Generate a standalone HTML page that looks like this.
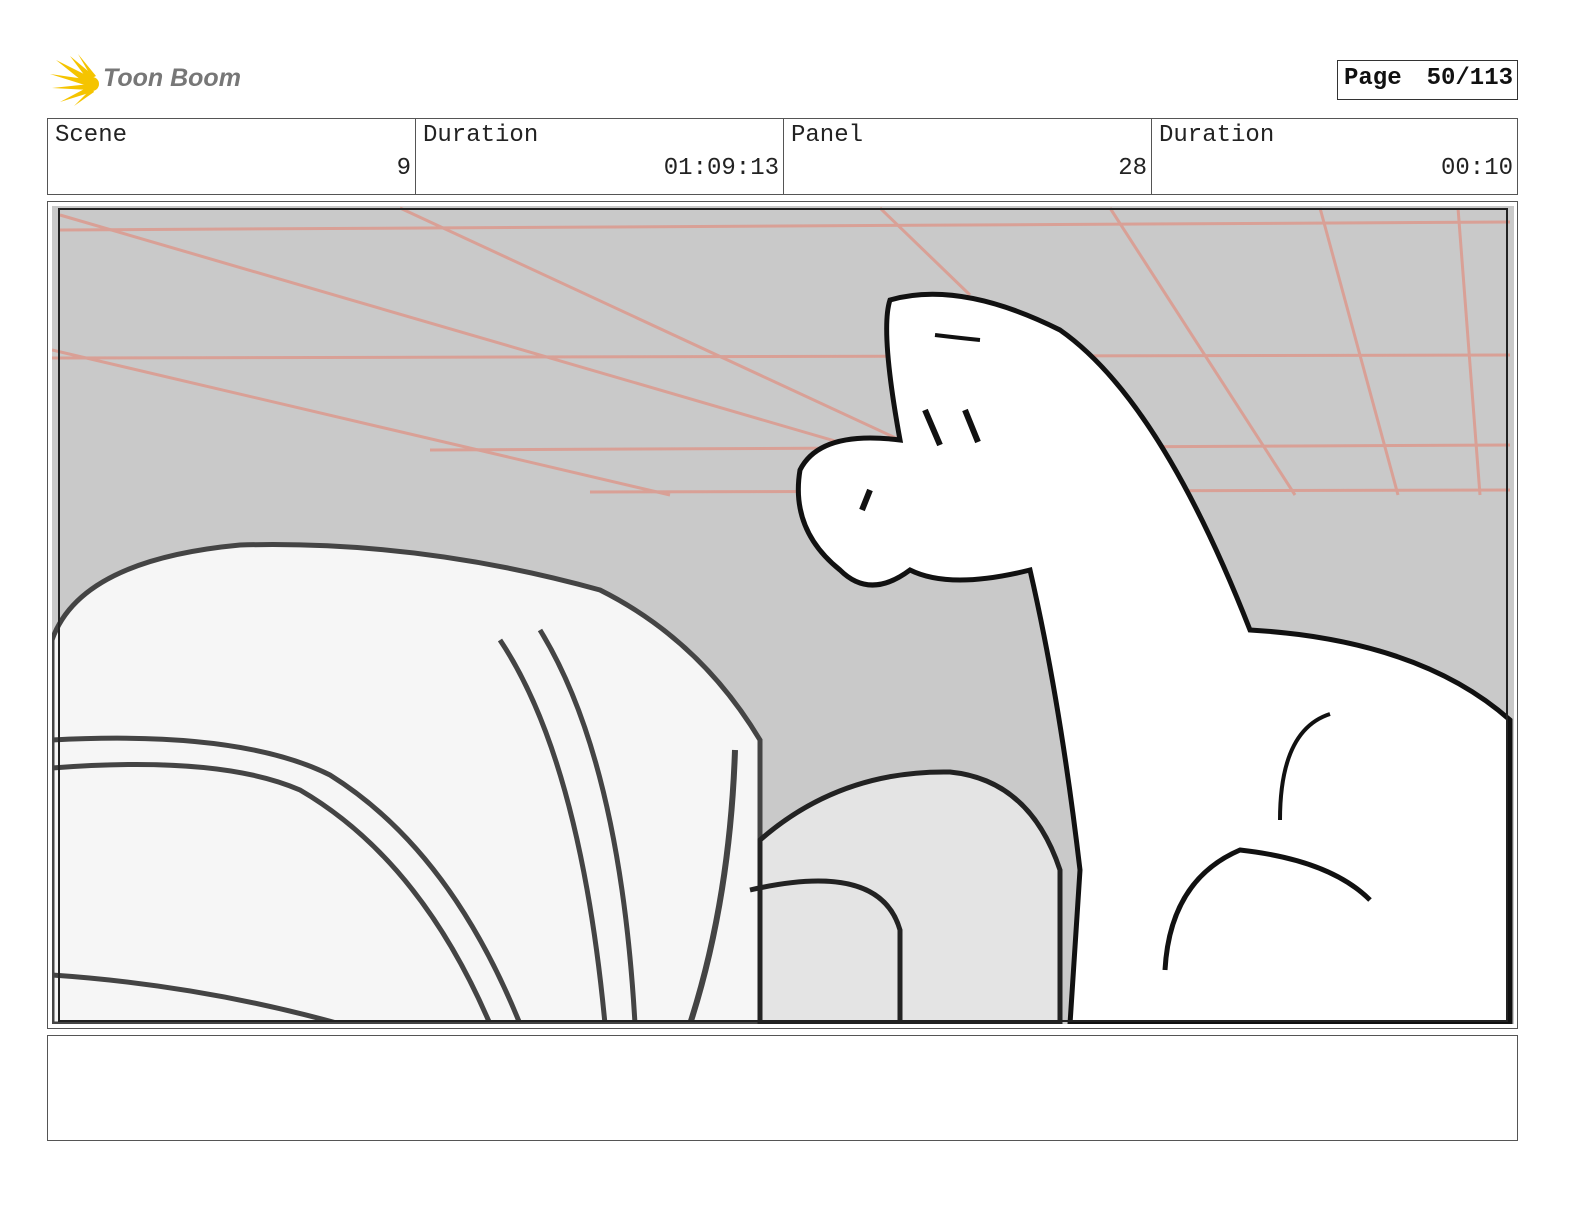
<!DOCTYPE html>
<html><head><meta charset="utf-8"><style>
body{margin:0;width:1584px;height:1224px;background:#fff;position:relative;font-family:"Liberation Mono",monospace;overflow:hidden}
.a{position:absolute}
.cell{position:absolute;top:118px;height:77px;border:1px solid #555;box-sizing:border-box;font-size:24px;color:#222}
.cell .l{position:absolute;left:7px;top:3px}
.cell .v{position:absolute;right:4px;top:36px}
</style></head><body>
<svg class="a" style="left:48px;top:54px" width="60" height="54" viewBox="0 0 60 54">
<g fill="#f5c400"><path d="M2 20 L44 26 L40 32Z"/><path d="M8 6 L44 24 L38 30Z"/><path d="M22 2 L46 22 L40 26Z"/><path d="M30 0 L48 22 L44 24Z"/><path d="M4 34 L42 30 L42 36Z"/><path d="M12 48 L42 32 L44 38Z"/><path d="M26 52 L44 34 L46 38Z"/><circle cx="44" cy="30" r="7"/></g>
</svg>
<div class="a" style="left:103px;top:64px;font:italic bold 25px 'Liberation Sans',sans-serif;color:#777">Toon Boom</div>
<div class="a" style="left:1337px;top:60px;width:181px;height:40px;border:1px solid #333;box-sizing:border-box;font-weight:bold;font-size:24px;line-height:36px;color:#111"><span style="position:absolute;left:6px">Page</span><span style="position:absolute;right:4px">50/113</span></div>
<div class="cell" style="left:47px;width:369px"><span class="l">Scene</span><span class="v">9</span></div>
<div class="cell" style="left:415px;width:369px"><span class="l">Duration</span><span class="v">01:09:13</span></div>
<div class="cell" style="left:783px;width:369px"><span class="l">Panel</span><span class="v">28</span></div>
<div class="cell" style="left:1151px;width:367px"><span class="l">Duration</span><span class="v">00:10</span></div>
<div class="a" style="left:47px;top:201px;width:1471px;height:828px;border:1px solid #555;box-sizing:border-box"></div>
<svg class="a" style="left:52px;top:206px" width="1462" height="818" viewBox="52 206 1462 818">
<rect x="52" y="206" width="1462" height="818" fill="#c9c9c9"/>
<g stroke="#d9a096" stroke-width="3" fill="none">
<path d="M60 230 L1510 222"/><path d="M52 358 L1510 355"/><path d="M52 350 L670 495"/><path d="M60 215 L900 460"/><path d="M400 208 L900 440"/><path d="M880 208 L970 295"/><path d="M1110 208 L1295 495"/><path d="M1320 208 L1398 495"/><path d="M1458 208 L1480 495"/><path d="M430 450 L1510 445"/><path d="M590 492 L1510 490"/>
</g>
<path d="M52 640 Q80 560 240 545 Q420 540 600 590 Q700 640 760 740 L760 1024 L52 1024Z" fill="#f6f6f6" stroke="#444" stroke-width="5"/>
<path d="M760 840 Q840 770 950 772 Q1030 780 1060 870 L1060 1024 L760 1024Z" fill="#e4e4e4" stroke="#222" stroke-width="5"/>
<path d="M52 740 Q240 730 330 775 Q450 850 520 1024" fill="none" stroke="#444" stroke-width="5"/>
<path d="M52 768 Q220 755 300 790 Q420 860 490 1024" fill="none" stroke="#444" stroke-width="5"/>
<path d="M52 975 Q200 985 340 1024" fill="none" stroke="#444" stroke-width="5"/>
<path d="M500 640 Q580 760 605 1024" fill="none" stroke="#444" stroke-width="5"/>
<path d="M540 630 Q620 760 635 1024" fill="none" stroke="#444" stroke-width="5"/>
<path d="M735 750 Q730 900 690 1024" fill="none" stroke="#444" stroke-width="6"/>
<path d="M750 890 Q880 860 900 930 L900 1024" fill="none" stroke="#222" stroke-width="5"/>
<path d="M890 300 Q960 280 1060 330 Q1160 400 1250 630 Q1420 640 1510 720 L1510 1024 L1070 1024 L1080 870 Q1060 700 1030 570 Q950 590 910 570 Q870 600 840 570 Q790 530 800 470 Q820 430 900 440 Q880 330 890 300Z" fill="#fff" stroke="#111" stroke-width="5"/>
<path d="M1330 714 Q1280 730 1280 820" fill="none" stroke="#111" stroke-width="4"/>
<path d="M1165 970 Q1170 880 1240 850 Q1330 860 1370 900" fill="none" stroke="#111" stroke-width="5"/>
<path d="M925 410 L940 445 M965 410 L978 442 M870 490 L862 510" stroke="#111" stroke-width="6"/>
<path d="M935 335 Q960 338 980 340" stroke="#111" stroke-width="4" fill="none"/>
<path d="M59 209 H1507 V1021 H59Z" fill="none" stroke="#222" stroke-width="2"/>
</svg>
<div class="a" style="left:47px;top:1035px;width:1471px;height:106px;border:1px solid #555;box-sizing:border-box"></div>
</body></html>
